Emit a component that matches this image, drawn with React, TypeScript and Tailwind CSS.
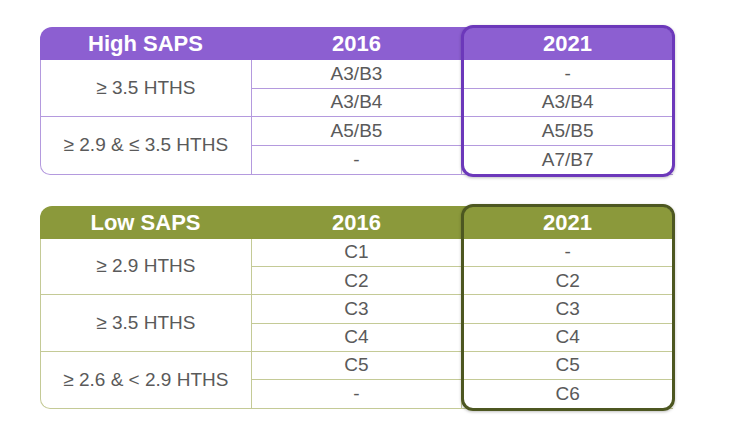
import React from "react";

type Group = { label: string; rows: [string, string][] };

type Theme = {
  header: string;
  frame: string;
  lineR: string;
  lineB: string;
  bodyBorder: string;
};

const purple: Theme = {
  header: "bg-[#8c5fd1]",
  frame: "border-[#6c38ba]",
  lineR: "border-r border-[#b49ade]",
  lineB: "border-b border-[#b49ade]",
  bodyBorder: "border-l border-b border-[#b49ade]",
};

const olive: Theme = {
  header: "bg-[#8b993b]",
  frame: "border-[#4d5721]",
  lineR: "border-r border-[#c4ca96]",
  lineB: "border-b border-[#c4ca96]",
  bodyBorder: "border-l border-b border-[#c4ca96]",
};

const high: Group[] = [
  { label: "≥ 3.5 HTHS", rows: [["A3/B3", "-"], ["A3/B4", "A3/B4"]] },
  { label: "≥ 2.9 & ≤ 3.5 HTHS", rows: [["A5/B5", "A5/B5"], ["-", "A7/B7"]] },
];

const low: Group[] = [
  { label: "≥ 2.9 HTHS", rows: [["C1", "-"], ["C2", "C2"]] },
  { label: "≥ 3.5 HTHS", rows: [["C3", "C3"], ["C4", "C4"]] },
  { label: "≥ 2.6 & < 2.9 HTHS", rows: [["C5", "C5"], ["-", "C6"]] },
];

function SapsTable({
  title,
  groups,
  theme,
  rowH,
}: {
  title: string;
  groups: Group[];
  theme: Theme;
  rowH: string;
}) {
  const total = groups.length * 2;
  return (
    <div className="relative w-[633px]">
      {/* header */}
      <div
        className={`grid grid-cols-3 h-[33px] items-center rounded-tl-[12px] rounded-tr-[12px] ${theme.header} text-white font-bold text-[22px] leading-none`}
      >
        <div className="text-center">{title}</div>
        <div className="text-center">2016</div>
        <div className="text-center">2021</div>
      </div>

      {/* body */}
      <div className={`grid grid-cols-3 rounded-bl-[10px] ${theme.bodyBorder} bg-white`}>
        {groups.map((g, gi) => {
          const lastGroup = gi === groups.length - 1;
          return (
            <React.Fragment key={g.label}>
              <div
                className={`flex items-center justify-center ${theme.lineR} ${lastGroup ? "" : theme.lineB}`}
                style={{ gridColumn: 1, gridRow: `${gi * 2 + 1} / span 2` }}
              >
                {g.label}
              </div>
              {g.rows.map(([a, b], ri) => {
                const idx = gi * 2 + ri;
                const last = idx === total - 1;
                return (
                  <React.Fragment key={idx}>
                    <div
                      className={`${rowH} flex items-center justify-center ${theme.lineR} ${last ? "" : theme.lineB}`}
                      style={{ gridColumn: 2, gridRow: idx + 1 }}
                    >
                      {a}
                    </div>
                    <div
                      className={`${rowH} flex items-center justify-center ${last ? "" : theme.lineB}`}
                      style={{ gridColumn: 3, gridRow: idx + 1 }}
                    >
                      {b}
                    </div>
                  </React.Fragment>
                );
              })}
            </React.Fragment>
          );
        })}
      </div>

      {/* 2021 highlight frame */}
      <div
        className={`absolute left-[421px] -top-[2px] -bottom-[2px] w-[214px] rounded-[12px] border-[3px] ${theme.frame} shadow-[0_1px_3px_rgba(0,0,0,0.25)] pointer-events-none`}
      />
    </div>
  );
}

export default function App() {
  return (
    <div
      className="w-[733px] h-[429px] bg-white pt-[27px] pl-[40px] flex flex-col gap-[31px] text-[19px] text-[#5a5a5a]"
      style={{ fontFamily: '"Liberation Sans", Arial, sans-serif' }}
    >
      <SapsTable title="High SAPS" groups={high} theme={purple} rowH="h-[28.5px]" />
      <SapsTable title="Low SAPS" groups={low} theme={olive} rowH="h-[28.2px]" />
    </div>
  );
}
